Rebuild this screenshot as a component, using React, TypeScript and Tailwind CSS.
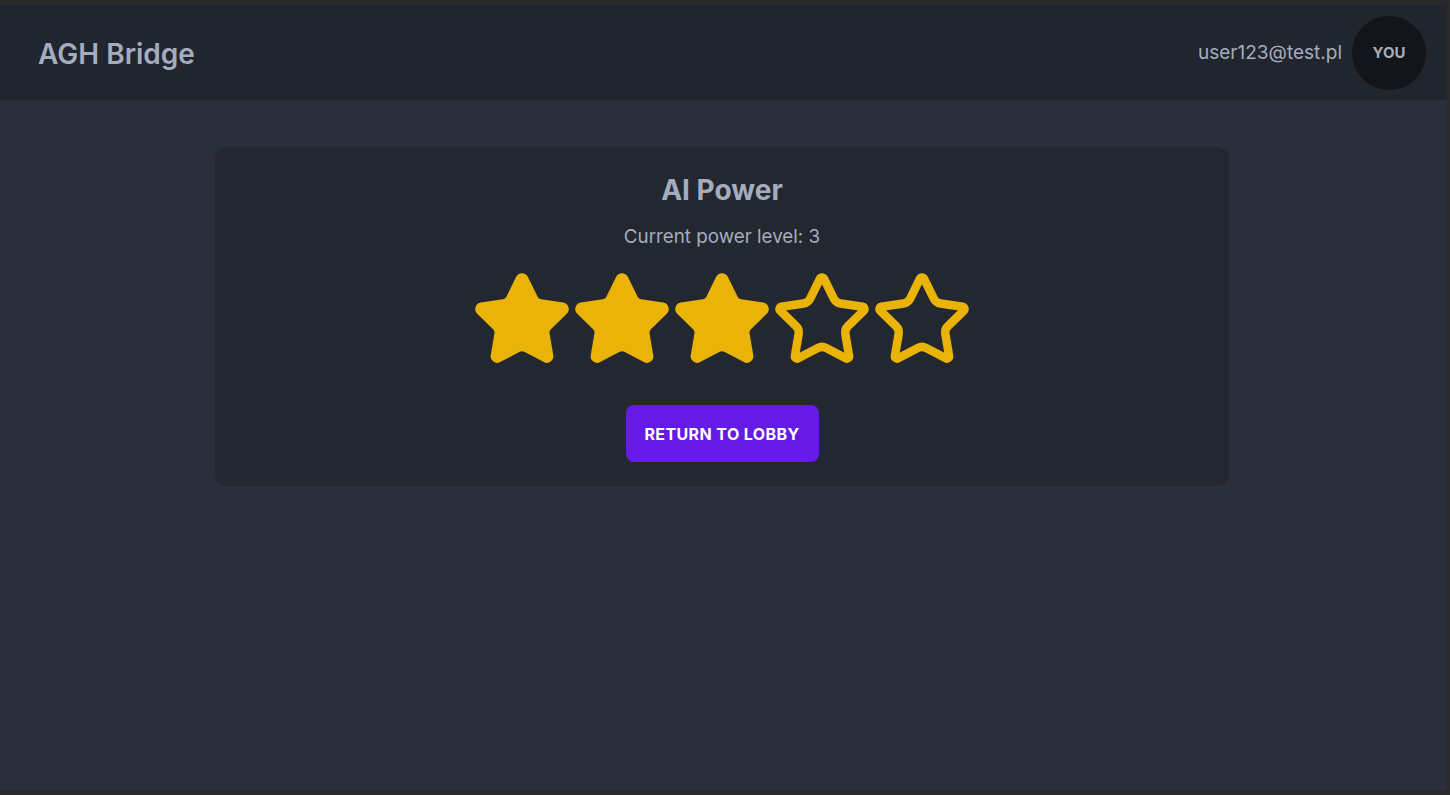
import React from 'react';

const starPath =
  "M11.525 2.295a.53.53 0 0 1 .95 0l2.31 4.679a2.123 2.123 0 0 0 1.595 1.16l5.166.756a.53.53 0 0 1 .294.904l-3.736 3.638a2.123 2.123 0 0 0-.611 1.878l.882 5.14a.53.53 0 0 1-.771.56l-4.618-2.428a2.122 2.122 0 0 0-1.973 0L6.396 21.01a.53.53 0 0 1-.77-.56l.881-5.139a2.122 2.122 0 0 0-.611-1.879L2.16 9.795a.53.53 0 0 1 .294-.906l5.165-.755a2.122 2.122 0 0 0 1.597-1.16z";

const Star = ({ filled }: { filled: boolean }) => (
  <svg
    width="102"
    height="102"
    viewBox="0 0 24 24"
    className="-mx-px"
    fill={filled ? "#eab308" : "none"}
    stroke="#eab308"
    strokeWidth="2"
    strokeLinecap="round"
    strokeLinejoin="round"
  >
    <path d={starPath} />
  </svg>
);

export default function App() {
  const level = 3;
  return (
    <div className="min-h-screen bg-[#2a2a2a] pt-[5px] pr-[3px] pb-[5px] flex flex-col font-['Inter',sans-serif]">
      <div className="flex-1 flex flex-col bg-[#2a2f3b]">
        <header className="h-[95px] bg-[#21252e] flex items-center justify-between pl-[38px] pr-[21px]">
          <h1 className="text-[28px] font-semibold text-[#a3adbf] pt-[2px]">AGH Bridge</h1>
          <div className="flex items-center gap-[10px]">
            <span className="text-[19px] text-[#a3adbf] pt-[2px]">user123@test.pl</span>
            <div className="w-[74px] h-[74px] rounded-full bg-[#13151a] flex items-center justify-center text-[15px] font-bold text-[#a3adbf] pt-[2px]">
              YOU
            </div>
          </div>
        </header>

        <main className="pt-[47px]">
          <div className="w-[1014px] ml-[215px] bg-[#232730] rounded-xl pt-[25px] pb-[24px] flex flex-col items-center">
            <h2 className="text-[28px] font-bold text-[#a3adbf] leading-[36px]">AI Power</h2>
            <p className="mt-[16px] text-[18.8px] text-[#a3adbf] leading-[26px]">
              Current power level: {level}
            </p>
            <div className="flex mt-[19px]">
              {[1, 2, 3, 4, 5].map((i) => (
                <Star key={i} filled={i <= level} />
              ))}
            </div>
            <button className="mt-[34px] h-[57px] w-[193px] rounded-lg bg-[#651ae6] text-white text-[16px] font-bold tracking-wide">
              RETURN TO LOBBY
            </button>
          </div>
        </main>
      </div>
    </div>
  );
}
